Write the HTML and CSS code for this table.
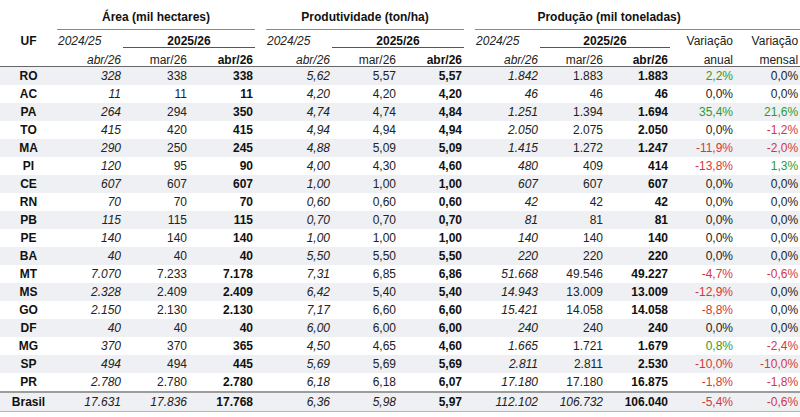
FILE: index.html
```html
<!DOCTYPE html>
<html lang="pt-BR">
<head>
<meta charset="utf-8">
<title>Tabela</title>
<link rel="stylesheet" href="styles.css">
</head>
<body>
<table class="t">
  <colgroup>
    <col class="c-uf">
    <col class="c-a"><col class="c-a"><col class="c-a">
    <col class="c-sp">
    <col class="c-a"><col class="c-a"><col class="c-a">
    <col class="c-sp">
    <col class="c-b"><col class="c-b"><col class="c-b"><col class="c-b"><col class="c-b">
  </colgroup>
  <thead>
    <tr class="h1">
      <th></th>
      <th class="grp" colspan="3">Área (mil hectares)</th>
      <th></th>
      <th class="grp" colspan="3">Produtividade (ton/ha)</th>
      <th></th>
      <th class="grp grp-prod" colspan="5">Produção (mil toneladas)</th>
    </tr>
    <tr class="h2">
      <th class="uf">UF</th>
      <td class="yr">2024/25</td>
      <th class="cur" colspan="2">2025/26</th>
      <td></td>
      <td class="yr">2024/25</td>
      <th class="cur" colspan="2">2025/26</th>
      <td></td>
      <td class="yr">2024/25</td>
      <th class="cur" colspan="2">2025/26</th>
      <td class="r">Variação</td>
      <td class="r">Variação</td>
    </tr>
    <tr class="h3">
      <td></td>
      <td class="r i">abr/26</td><td class="r">mar/26</td><td class="r b">abr/26</td>
      <td></td>
      <td class="r i">abr/26</td><td class="r">mar/26</td><td class="r b">abr/26</td>
      <td></td>
      <td class="r i">abr/26</td><td class="r">mar/26</td><td class="r b">abr/26</td>
      <td class="r">anual</td><td class="r">mensal</td>
    </tr>
  </thead>
  <tbody>
    <tr class="s"><th>RO</th><td class="i">328</td><td>338</td><td class="b">338</td><td></td><td class="i">5,62</td><td>5,57</td><td class="b">5,57</td><td></td><td class="i">1.842</td><td>1.883</td><td class="b">1.883</td><td class="up">2,2%</td><td>0,0%</td></tr>
    <tr><th>AC</th><td class="i">11</td><td>11</td><td class="b">11</td><td></td><td class="i">4,20</td><td>4,20</td><td class="b">4,20</td><td></td><td class="i">46</td><td>46</td><td class="b">46</td><td>0,0%</td><td>0,0%</td></tr>
    <tr class="s"><th>PA</th><td class="i">264</td><td>294</td><td class="b">350</td><td></td><td class="i">4,74</td><td>4,74</td><td class="b">4,84</td><td></td><td class="i">1.251</td><td>1.394</td><td class="b">1.694</td><td class="up">35,4%</td><td class="up">21,6%</td></tr>
    <tr><th>TO</th><td class="i">415</td><td>420</td><td class="b">415</td><td></td><td class="i">4,94</td><td>4,94</td><td class="b">4,94</td><td></td><td class="i">2.050</td><td>2.075</td><td class="b">2.050</td><td>0,0%</td><td class="dn">-1,2%</td></tr>
    <tr class="s"><th>MA</th><td class="i">290</td><td>250</td><td class="b">245</td><td></td><td class="i">4,88</td><td>5,09</td><td class="b">5,09</td><td></td><td class="i">1.415</td><td>1.272</td><td class="b">1.247</td><td class="dn">-11,9%</td><td class="dn">-2,0%</td></tr>
    <tr><th>PI</th><td class="i">120</td><td>95</td><td class="b">90</td><td></td><td class="i">4,00</td><td>4,30</td><td class="b">4,60</td><td></td><td class="i">480</td><td>409</td><td class="b">414</td><td class="dn">-13,8%</td><td class="up">1,3%</td></tr>
    <tr class="s"><th>CE</th><td class="i">607</td><td>607</td><td class="b">607</td><td></td><td class="i">1,00</td><td>1,00</td><td class="b">1,00</td><td></td><td class="i">607</td><td>607</td><td class="b">607</td><td>0,0%</td><td>0,0%</td></tr>
    <tr><th>RN</th><td class="i">70</td><td>70</td><td class="b">70</td><td></td><td class="i">0,60</td><td>0,60</td><td class="b">0,60</td><td></td><td class="i">42</td><td>42</td><td class="b">42</td><td>0,0%</td><td>0,0%</td></tr>
    <tr class="s"><th>PB</th><td class="i">115</td><td>115</td><td class="b">115</td><td></td><td class="i">0,70</td><td>0,70</td><td class="b">0,70</td><td></td><td class="i">81</td><td>81</td><td class="b">81</td><td>0,0%</td><td>0,0%</td></tr>
    <tr><th>PE</th><td class="i">140</td><td>140</td><td class="b">140</td><td></td><td class="i">1,00</td><td>1,00</td><td class="b">1,00</td><td></td><td class="i">140</td><td>140</td><td class="b">140</td><td>0,0%</td><td>0,0%</td></tr>
    <tr class="s"><th>BA</th><td class="i">40</td><td>40</td><td class="b">40</td><td></td><td class="i">5,50</td><td>5,50</td><td class="b">5,50</td><td></td><td class="i">220</td><td>220</td><td class="b">220</td><td>0,0%</td><td>0,0%</td></tr>
    <tr><th>MT</th><td class="i">7.070</td><td>7.233</td><td class="b">7.178</td><td></td><td class="i">7,31</td><td>6,85</td><td class="b">6,86</td><td></td><td class="i">51.668</td><td>49.546</td><td class="b">49.227</td><td class="dn">-4,7%</td><td class="dn">-0,6%</td></tr>
    <tr class="s"><th>MS</th><td class="i">2.328</td><td>2.409</td><td class="b">2.409</td><td></td><td class="i">6,42</td><td>5,40</td><td class="b">5,40</td><td></td><td class="i">14.943</td><td>13.009</td><td class="b">13.009</td><td class="dn">-12,9%</td><td>0,0%</td></tr>
    <tr><th>GO</th><td class="i">2.150</td><td>2.130</td><td class="b">2.130</td><td></td><td class="i">7,17</td><td>6,60</td><td class="b">6,60</td><td></td><td class="i">15.421</td><td>14.058</td><td class="b">14.058</td><td class="dn">-8,8%</td><td>0,0%</td></tr>
    <tr class="s"><th>DF</th><td class="i">40</td><td>40</td><td class="b">40</td><td></td><td class="i">6,00</td><td>6,00</td><td class="b">6,00</td><td></td><td class="i">240</td><td>240</td><td class="b">240</td><td>0,0%</td><td>0,0%</td></tr>
    <tr><th>MG</th><td class="i">370</td><td>370</td><td class="b">365</td><td></td><td class="i">4,50</td><td>4,65</td><td class="b">4,60</td><td></td><td class="i">1.665</td><td>1.721</td><td class="b">1.679</td><td class="up">0,8%</td><td class="dn">-2,4%</td></tr>
    <tr class="s"><th>SP</th><td class="i">494</td><td>494</td><td class="b">445</td><td></td><td class="i">5,69</td><td>5,69</td><td class="b">5,69</td><td></td><td class="i">2.811</td><td>2.811</td><td class="b">2.530</td><td class="dn">-10,0%</td><td class="dn">-10,0%</td></tr>
    <tr><th>PR</th><td class="i">2.780</td><td>2.780</td><td class="b">2.780</td><td></td><td class="i">6,18</td><td>6,18</td><td class="b">6,07</td><td></td><td class="i">17.180</td><td>17.180</td><td class="b">16.875</td><td class="dn">-1,8%</td><td class="dn">-1,8%</td></tr>
  </tbody>
  <tfoot>
    <tr class="tot"><th>Brasil</th><td class="i">17.631</td><td class="i">17.836</td><td class="b">17.768</td><td></td><td class="i">6,36</td><td class="i">5,98</td><td class="b">5,97</td><td></td><td class="i">112.102</td><td class="i">106.732</td><td class="b">106.040</td><td class="dn">-5,4%</td><td class="dn">-0,6%</td></tr>
  </tfoot>
</table>
</body>
</html>
```
FILE: styles.css
```css
html, body {
  margin: 0;
  padding: 0;
  background: #ffffff;
}

.t {
  width: 800px;
  table-layout: fixed;
  border-collapse: separate;
  border-spacing: 0;
  font-family: "Liberation Sans", Arial, sans-serif;
  font-size: 12px;
  color: #222;
}

.c-uf { width: 57px; }
.c-a { width: 66px; }
.c-sp { width: 11px; }
.c-b { width: 65px; }

.t th, .t td {
  padding: 0 2px 0 0;
  white-space: nowrap;
  overflow: visible;
  font-weight: normal;
  text-align: right;
}

/* header rows */
.h1 th, .h1 td {
  line-height: 12px;
  padding-top: 11px;
  padding-bottom: 6px;
  vertical-align: bottom;
  border-bottom: 1px solid transparent;
}
.h1 .grp {
  font-weight: bold;
  text-align: center;
  color: #111;
  padding-right: 0;
  border-bottom-color: #8a8a8a;
}
.h1 .grp-prod {
  padding-right: 57px;
}

.h2 th, .h2 td {
  line-height: 12px;
  padding-top: 5px;
  padding-bottom: 0;
  vertical-align: bottom;
  border-bottom: 1px solid transparent;
}
.h2 .uf {
  font-weight: bold;
  text-align: center;
  color: #111;
  padding-right: 0;
}
.h2 .yr {
  font-style: italic;
  text-align: left;
  padding-left: 1px;
}
.h2 .cur {
  font-weight: bold;
  text-align: center;
  color: #111;
  padding-right: 0;
  border-bottom-color: #555;
}

.h3 th, .h3 td {
  line-height: 12px;
  padding-top: 6px;
  padding-bottom: 0;
  vertical-align: bottom;
  border-bottom: 1px solid #666;
}

.r { text-align: right; }
.i { font-style: italic; }
.b { font-weight: bold; color: #111; }
.t .b { font-weight: bold; }

/* body rows */
tbody th, tbody td,
tfoot th, tfoot td {
  line-height: 18px;
  vertical-align: middle;
}
tbody th, tfoot th {
  font-weight: bold;
  text-align: center;
  color: #111;
  padding-right: 0;
}
.t tbody th, .t tfoot th {
  font-weight: bold;
  text-align: center;
  padding-right: 0;
}
tbody tr.s th, tbody tr.s td {
  background: #eef0f3;
}

.up { color: #2f9a2f; }
.dn { color: #d3383c; }

.tot th, .tot td {
  background: #eef0f3;
  border-top: 2px solid #9c9c9c;
  border-bottom: 1px solid #b5b5b5;
}
```
